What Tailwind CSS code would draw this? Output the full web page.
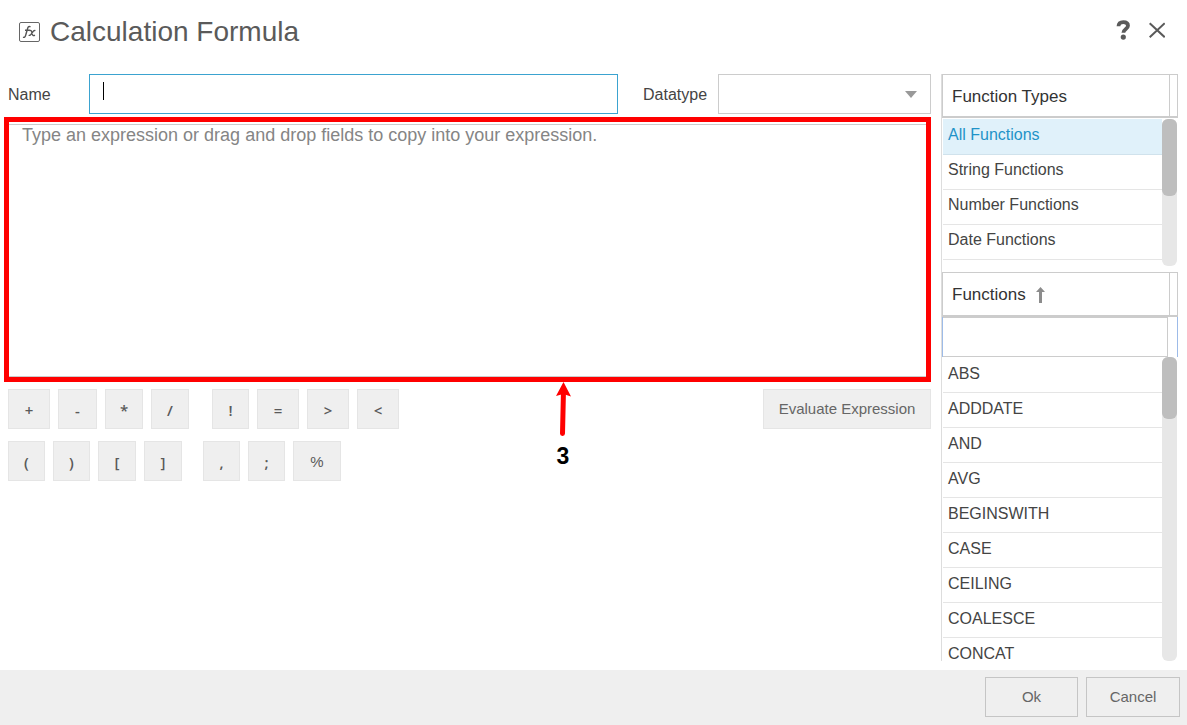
<!DOCTYPE html>
<html lang="en">
<head>
<meta charset="utf-8">
<title>Calculation Formula</title>
<script src="https://cdn.jsdelivr.net/npm/@tailwindcss/browser@4"></script>
</head>
<body class="flex h-screen flex-col overflow-hidden bg-white font-['Liberation_Sans',sans-serif] text-base text-[#444]">
  <header class="flex h-[74px] shrink-0 items-start justify-between pt-3 pr-[22px] pl-[19px]">
    <div class="flex h-10 items-center gap-[10px]">
      <svg class="size-[21px]" viewBox="0 0 21 21" fill="none" stroke="#555" aria-hidden="true">
        <rect x="0.5" y="0.5" width="20" height="19" rx="1.500" stroke="#666"/>
        <path d="M4 15.200c1.500.5 2.300-.4 2.800-2.400L8.600 6.500C9.100 4.600 10.100 4 11.500 4.800M6 8.200h4.800" stroke-width="1.400"/>
        <path d="M10.300 8.700c1.500-.8 2.100 0 2.400 1.200l.7 2.500c.3 1.200 1.100 1.700 2.500.7M16.400 8.700c-1.200-.6-2 .2-2.900 1.600l-1.500 2.100c-.7 1-1.400 1.300-2.300.7" stroke-width="1.400"/>
      </svg>
      <h1 class="text-[28px] leading-10 text-[#5a5a5a]">Calculation Formula</h1>
    </div>
    <div class="flex h-9 items-center gap-[18px]">
      <button type="button" aria-label="Help" class="h-5 w-[15px]">
        <svg class="h-5 w-[15px]" viewBox="0 0 15 20" aria-hidden="true">
          <path d="M2.500 6.300C2.600 3.500 4.400 2.100 7.300 2.100c3 0 4.700 1.400 4.700 3.600 0 3.300-4.600 3.200-4.600 7.100" fill="none" stroke="#5a5a5a" stroke-width="3.800"/>
          <circle cx="7.300" cy="17.100" r="2.600" fill="#5a5a5a"/>
        </svg>
      </button>
      <button type="button" aria-label="Close" class="size-4">
        <svg class="size-4" viewBox="0 0 16 16" stroke="#5a5a5a" stroke-width="2" aria-hidden="true"><path d="M.7 1.200l15 14M15.700 1.200L.7 15.200"/></svg>
      </button>
    </div>
  </header>

  <main class="flex min-h-0 flex-1 gap-[10px] pr-[9px] pb-[9px] pl-2">
    <section class="flex min-w-0 flex-1 flex-col">
      <div class="flex h-10 items-center">
        <label for="name" class="w-[81px] shrink-0 pt-[2px]">Name</label>
        <div class="relative min-w-0 flex-1">
          <input id="name" type="text" class="block h-10 w-full border border-[#3ba3d0] px-[13px] pb-1 text-base outline-none">
          <span class="pointer-events-none absolute top-2 left-[14px] h-[18px] w-px bg-black"></span>
        </div>
        <label for="datatype" class="ml-[25px] w-[75px] shrink-0 pt-[2px]">Datatype</label>
        <div class="relative w-[213px] shrink-0">
          <select id="datatype" class="block h-10 w-full appearance-none border border-[#ccc] bg-white px-3 outline-none"><option></option></select>
          <svg class="pointer-events-none absolute top-[17px] right-[14px] h-[7px] w-3" viewBox="0 0 12 7" fill="#999" aria-hidden="true"><path d="M0 0h12L6 7z"/></svg>
        </div>
      </div>

      <div class="relative mt-[10px]">
        <textarea aria-label="Expression" placeholder="Type an expression or drag and drop fields to copy into your expression." class="block h-[253px] w-full resize-none border border-[#ccc] px-[13px] text-lg leading-5 outline-none placeholder:text-[#858585]"></textarea>
        <div class="pointer-events-none absolute -top-[7px] right-0 -bottom-[5px] -left-1 border-5 border-[#f00]"></div>
        <div class="pointer-events-none absolute top-full left-[calc(60%-7px)] mt-[5px] flex w-4 flex-col items-center">
          <svg class="h-[54px] w-4" viewBox="0 0 16 54" aria-hidden="true">
            <path d="M8.500 8L7.500 51.500" stroke="#f00" stroke-width="5" stroke-linecap="round"/>
            <path d="M8.500 0L16 14.500 8.300 12 1 14z" fill="#f00"/>
          </svg>
          <span class="mt-2 text-[23px] leading-6 font-bold text-black">3</span>
        </div>
      </div>

      <div class="mt-3 flex items-start justify-between">
        <div class="grid gap-3 font-['Open_Sans',sans-serif] text-[15px] font-semibold text-[#5a5a5a]">
          <div class="flex gap-2">
            <button type="button" class="h-10 w-[42px] border border-[#e5e5e5] bg-[#efefef] pt-[2px]">+</button>
            <button type="button" class="h-10 w-[39px] border border-[#e5e5e5] bg-[#efefef] pt-[2px]">-</button>
            <button type="button" class="h-10 w-[38px] border border-[#e5e5e5] bg-[#efefef] pt-[2px]">*</button>
            <button type="button" class="h-10 w-[38px] border border-[#e5e5e5] bg-[#efefef] pt-[2px]">/</button>
            <button type="button" class="ml-[15px] h-10 w-[37px] border border-[#e5e5e5] bg-[#efefef] pt-[2px]">!</button>
            <button type="button" class="h-10 w-[42px] border border-[#e5e5e5] bg-[#efefef] pt-[2px]">=</button>
            <button type="button" class="h-10 w-[42px] border border-[#e5e5e5] bg-[#efefef] pt-[2px]">&gt;</button>
            <button type="button" class="h-10 w-[42px] border border-[#e5e5e5] bg-[#efefef] pt-[2px]">&lt;</button>
          </div>
          <div class="flex gap-2">
            <button type="button" class="h-10 w-[37px] border border-[#e5e5e5] bg-[#efefef] pt-[2px]">(</button>
            <button type="button" class="h-10 w-[37px] border border-[#e5e5e5] bg-[#efefef] pt-[2px]">)</button>
            <button type="button" class="h-10 w-[38px] border border-[#e5e5e5] bg-[#efefef] pt-[2px]">[</button>
            <button type="button" class="h-10 w-[38px] border border-[#e5e5e5] bg-[#efefef] pt-[2px]">]</button>
            <button type="button" class="ml-[13px] h-10 w-[37px] border border-[#e5e5e5] bg-[#efefef] pt-[2px]">,</button>
            <button type="button" class="h-10 w-[37px] border border-[#e5e5e5] bg-[#efefef] pt-[2px]">;</button>
            <button type="button" class="h-10 w-12 border border-[#e5e5e5] bg-[#efefef] pt-[2px] font-['Liberation_Sans',sans-serif] font-normal">%</button>
          </div>
        </div>
        <button type="button" class="h-10 w-[168px] border border-[#e5e5e5] bg-[#efefef] text-[15px] text-[#666]">Evaluate Expression</button>
      </div>
    </section>

    <aside class="flex w-[237px] shrink-0 flex-col border-l border-[#ddd]">
      <div class="flex h-11 shrink-0 border border-b-2 border-[#ccc] pr-[7px]">
        <h2 class="flex flex-1 items-center border-r border-[#ccc] pt-[2px] pl-[9px] text-[17px] text-[#333]">Function Types</h2>
      </div>
      <div class="mt-px flex h-[147px] shrink-0 overflow-hidden pr-px">
        <ul class="min-w-0 flex-1 pl-px">
          <li><button type="button" class="block h-9 w-full border-b border-[#d0e2ec] bg-[#e0f1fa] pb-1 pl-[5px] text-left text-[#1f93c8]">All Functions</button></li>
          <li><button type="button" class="block h-[35px] w-full border-b border-[#e5e5e5] pb-1 pl-[5px] text-left">String Functions</button></li>
          <li><button type="button" class="block h-[35px] w-full border-b border-[#e5e5e5] pb-1 pl-[5px] text-left">Number Functions</button></li>
          <li><button type="button" class="block h-[35px] w-full border-b border-[#e5e5e5] pb-1 pl-[5px] text-left">Date Functions</button></li>
        </ul>
        <div class="w-[15px] shrink-0 rounded-md bg-[#e7e7e7]"><div class="h-[77px] rounded-md bg-[#bebebe]"></div></div>
      </div>
      <div class="mt-[6px] flex h-[45px] shrink-0 border border-b-2 border-[#ccc] pr-[7px]">
        <h2 class="flex flex-1 items-center gap-[10px] border-r border-[#ccc] pt-[2px] pl-[9px] text-[17px] text-[#333]">Functions
          <svg class="h-4 w-[9px]" viewBox="0 0 9 16" fill="#8c8c8c" aria-hidden="true"><path d="M4.500 0L9 5H6v11H3V5H0z"/></svg>
        </h2>
      </div>
      <div class="flex h-10 shrink-0 border-x border-[#9dbbe8] pr-[9px]">
        <input type="text" aria-label="Filter functions" class="h-10 w-full border border-l-0 border-[#ccc] px-2 outline-none">
      </div>
      <div class="flex min-h-0 flex-1 overflow-hidden pr-px">
        <ul class="min-w-0 flex-1 overflow-hidden pl-px">
          <li><button type="button" class="block h-9 w-full border-b border-[#e5e5e5] pb-[2px] pl-[5px] text-left">ABS</button></li>
          <li><button type="button" class="block h-[35px] w-full border-b border-[#e5e5e5] pb-[2px] pl-[5px] text-left">ADDDATE</button></li>
          <li><button type="button" class="block h-[35px] w-full border-b border-[#e5e5e5] pb-[2px] pl-[5px] text-left">AND</button></li>
          <li><button type="button" class="block h-[35px] w-full border-b border-[#e5e5e5] pb-[2px] pl-[5px] text-left">AVG</button></li>
          <li><button type="button" class="block h-[35px] w-full border-b border-[#e5e5e5] pb-[2px] pl-[5px] text-left">BEGINSWITH</button></li>
          <li><button type="button" class="block h-[35px] w-full border-b border-[#e5e5e5] pb-[2px] pl-[5px] text-left">CASE</button></li>
          <li><button type="button" class="block h-[35px] w-full border-b border-[#e5e5e5] pb-[2px] pl-[5px] text-left">CEILING</button></li>
          <li><button type="button" class="block h-[35px] w-full border-b border-[#e5e5e5] pb-[2px] pl-[5px] text-left">COALESCE</button></li>
          <li><button type="button" class="block h-[35px] w-full border-b border-[#e5e5e5] pb-[2px] pl-[5px] text-left">CONCAT</button></li>
        </ul>
        <div class="w-[15px] shrink-0 rounded-md bg-[#e7e7e7]"><div class="h-[62px] rounded-md bg-[#bebebe]"></div></div>
      </div>
    </aside>
  </main>

  <footer class="flex h-[55px] shrink-0 items-start justify-end gap-2 bg-[#efefef] pt-[7px] pr-[7px] text-[15px] text-[#666]">
    <button type="button" class="h-10 w-[93px] border border-[#c5c5c5]">Ok</button>
    <button type="button" class="h-10 w-[94px] border border-[#c5c5c5]">Cancel</button>
  </footer>
</body>
</html>
